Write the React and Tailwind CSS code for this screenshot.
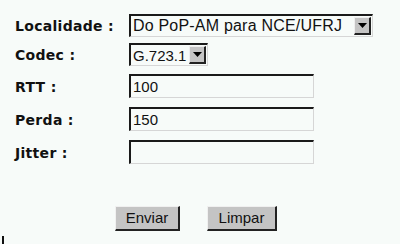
import React from "react";

const Arrow = () => (
  <div className="w-[17px] h-[18px] bg-[#c4c4c4] border-t border-l border-t-[#eeeeee] border-l-[#eeeeee] border-b-2 border-r-2 border-b-[#222] border-r-[#222] flex items-center justify-center">
    <svg width="9" height="5" viewBox="0 0 9 5"><polygon points="0,0 9,0 4.5,5" fill="#000" /></svg>
  </div>
);

const Select = ({ text, w, size }) => (
  <div className={`${w} h-[23px] bg-[#f7fbf9] border-t-2 border-l-2 border-t-[#1a1a1a] border-l-[#1a1a1a] border-b border-r border-b-[#d6d6d6] border-r-[#d6d6d6] flex items-center pl-[2px] pr-[1px] justify-between`}>
    <span className={`${size} leading-none text-[#111]`}>{text}</span>
    <Arrow />
  </div>
);

const Input = ({ value }) => (
  <div className="w-[185px] h-[24px] bg-[#f7fbf9] border-t-2 border-l-2 border-t-[#1a1a1a] border-l-[#1a1a1a] border-b border-r border-b-[#d6d6d6] border-r-[#d6d6d6] flex items-center pl-[2px]">
    <span className="text-[15px] leading-none text-[#111]">{value}</span>
  </div>
);

const Label = ({ children }) => (
  <div className="w-[114px] font-bold text-[14px] text-[#111] tracking-[0.3px] pt-[2px]" style={{ fontFamily: '"DejaVu Sans", sans-serif' }}>{children}</div>
);

const Button = ({ children, w }) => (
  <div className={`${w} h-[25px] bg-[#c4c4c4] border-t border-l border-t-[#f0f0f0] border-l-[#f0f0f0] border-b-2 border-r-2 border-b-[#222] border-r-[#222] flex items-center justify-center text-[15px] text-[#111]`}>
    {children}
  </div>
);

export default function App() {
  return (
    <div className="w-[400px] h-[244px] bg-[#f7fbf9] relative overflow-hidden" style={{ fontFamily: '"Liberation Sans", Arial, sans-serif' }}>
      <div className="pl-[15px] pt-[14px] flex flex-col">
        <div className="flex items-center">
          <Label>Localidade :</Label>
          <Select text="Do PoP-AM para NCE/UFRJ" w="w-[244px]" size="text-[16px] tracking-[0.2px]" />
        </div>
        <div className="flex items-center mt-[6px]">
          <Label>Codec :</Label>
          <Select text="G.723.1" w="w-[79px]" size="text-[15px]" />
        </div>
        <div className="flex items-center mt-[8px]">
          <Label>RTT :</Label>
          <Input value="100" />
        </div>
        <div className="flex items-center mt-[9px]">
          <Label>Perda :</Label>
          <Input value="150" />
        </div>
        <div className="flex items-center mt-[9px]">
          <Label>Jitter :</Label>
          <Input value="" />
        </div>
        <div className="flex mt-[42px] pl-[100px] gap-[27px]">
          <Button w="w-[65px]">Enviar</Button>
          <Button w="w-[70px]">Limpar</Button>
        </div>
      </div>
      <div className="absolute left-[2px] top-[236px] w-[2px] h-[8px] bg-[#111]" />
    </div>
  );
}
